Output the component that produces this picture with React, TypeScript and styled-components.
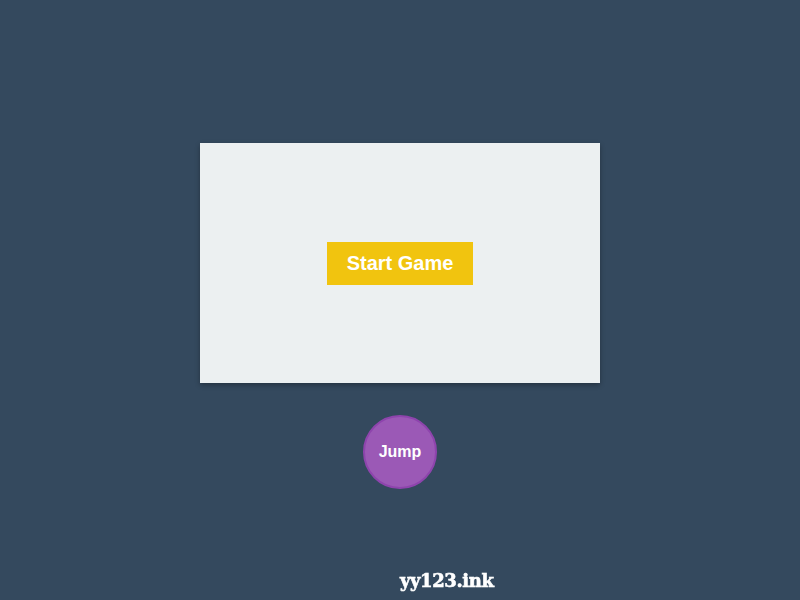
import styled, { createGlobalStyle } from 'styled-components'

const Global = createGlobalStyle`
  html, body {
    margin: 0;
    padding: 0;
    background: #34495e;
    font-family: 'Liberation Sans', Arial, sans-serif;
  }
`

const Page = styled.div`
  height: 600px;
  display: flex;
  flex-direction: column;
  align-items: center;
  padding-top: 143px;
  box-sizing: border-box;
`

const Board = styled.div`
  width: 400px;
  height: 240px;
  background: #ecf0f1;
  box-shadow: 0 2px 5px rgba(0, 0, 0, 0.3);
  display: flex;
  align-items: center;
  justify-content: center;
`

const StartButton = styled.button`
  width: 146px;
  height: 43px;
  border: none;
  background: #f1c40f;
  color: #fff;
  font-family: 'Liberation Sans', Arial, sans-serif;
  font-weight: 700;
  font-size: 20px;
  cursor: pointer;
`

const JumpButton = styled.button`
  margin-top: 32px;
  width: 74px;
  height: 74px;
  border-radius: 50%;
  border: 2px solid #8e44ad;
  background: #9b59b6;
  color: #fff;
  font-family: 'Liberation Sans', Arial, sans-serif;
  font-weight: 700;
  font-size: 16px;
  cursor: pointer;
`

const Mark = styled.div`
  position: fixed;
  left: 400px;
  top: 570px;
  color: #fff;
  font-family: 'DejaVu Serif', serif;
  font-weight: 700;
  font-size: 18px;
  letter-spacing: -0.4px;
  -webkit-text-stroke: 0.6px #fff;
`

export default function App() {
  return (
    <>
      <Global />
      <Page>
        <Board>
          <StartButton>Start Game</StartButton>
        </Board>
        <JumpButton>Jump</JumpButton>
      </Page>
      <Mark>yy123.ink</Mark>
    </>
  )
}
